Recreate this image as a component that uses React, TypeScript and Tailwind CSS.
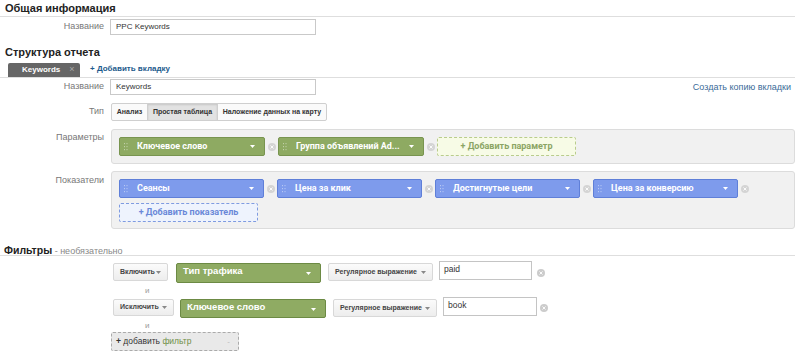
import React from "react";

const sans = "font-['Liberation_Sans',Arial,sans-serif]";
const roboto = "font-['Roboto','Liberation_Sans',sans-serif]";

function Remove({ light }: { light?: boolean }) {
  return (
    <span
      className={`flex h-[8px] w-[8px] items-center justify-center rounded-full ${
        light ? "bg-[#d4d4d4]" : "bg-[#cccccc]"
      }`}
    >
      <svg width="4" height="4" viewBox="0 0 4 4">
        <path d="M0.5 0.5L3.5 3.5M3.5 0.5L0.5 3.5" stroke="#fff" strokeWidth="0.9" />
      </svg>
    </span>
  );
}

function Grip() {
  return (
    <svg width="4" height="10" viewBox="0 0 4 10" className="shrink-0">
      {[1, 4, 7].map((y) => (
        <g key={y} fill="rgba(255,255,255,0.45)">
          <rect x="0" y={y} width="1" height="1.2" />
          <rect x="2.5" y={y} width="1" height="1.2" />
        </g>
      ))}
    </svg>
  );
}

function Caret({ color = "#fff" }: { color?: string }) {
  return (
    <svg width="5" height="3" viewBox="0 0 5 3" className="shrink-0">
      <path d="M0 0H5L2.5 3Z" fill={color} />
    </svg>
  );
}

function Chip({ text, kind, w = "w-[146px]" }: { text: string; kind: "dim" | "metric"; w?: string }) {
  const cls =
    kind === "dim"
      ? "bg-[#8eaa62] border-[#78944f]"
      : "bg-[#7e9bec] border-[#5f7fd8]";
  return (
    <div
      className={`flex h-[19px] ${w} shrink-0 items-center rounded-[2px] border ${cls} pl-[4px] pr-[9px]`}
    >
      <Grip />
      <span className={`ml-[9px] flex-1 truncate text-[9px] font-bold text-white ${roboto}`}>
        {text}
      </span>
      <Caret />
    </div>
  );
}

function Gap() {
  return (
    <div className="flex w-[13px] shrink-0 items-center justify-center">
      <Remove light />
    </div>
  );
}

function SelectBtn({ text, w, h = "h-[18px]", mt }: { text: string; w: string; h?: string; mt: string }) {
  return (
    <div
      className={`${w} ${h} ${mt} flex shrink-0 items-center justify-between whitespace-nowrap rounded-[2px] border border-[#d8d8d8] bg-gradient-to-b from-[#fbfbfb] to-[#ededed] pl-[6px] pr-[6px] text-[7px] font-bold text-[#444]`}
    >
      <span>{text}</span>
      <Caret color="#888" />
    </div>
  );
}

function FilterChip({ text, w, h, ml, mt }: { text: string; w: string; h: string; ml: string; mt: string }) {
  return (
    <div
      className={`${w} ${h} ${ml} ${mt} flex shrink-0 items-start justify-between rounded-[2px] border border-[#6c8a44] bg-[#8fab63] pl-[6px] pr-[9px] pt-[1px]`}
    >
      <span className="text-[9.5px] font-bold leading-[11px] text-white">{text}</span>
      <span className="mt-[7px]">
        <Caret />
      </span>
    </div>
  );
}

export default function App() {
  return (
    <div className={`h-[354px] w-[800px] overflow-hidden bg-white text-[#333] ${sans}`}>
      {/* Общая информация */}
      <div className="h-[17px] w-[795px] border-b border-[#dedede] pl-[5px] text-[11px] font-bold leading-[16px] text-[#222]">
        Общая информация
      </div>
      <div className="mt-[2px] flex h-[16px] items-center">
        <div className="w-[104px] text-right text-[9px] text-[#777]">Название</div>
        <div className="ml-[6px] flex h-[16px] w-[206px] items-center border border-[#c9c9c9] pl-[5px] text-[8px] text-[#333]">
          PPC Keywords
        </div>
      </div>

      {/* Структура отчета */}
      <div className="mt-[10px] h-[14px] pl-[5px] text-[11px] font-bold leading-[14px] text-[#222]">
        Структура отчета
      </div>
      <div className="mt-[4px] flex h-[15px] w-[795px] items-end border-b border-[#dedede]">
        <div className="ml-[8px] flex h-[14px] w-[72px] items-center rounded-t-[2px] bg-[#666] pl-[14px] text-[8px] font-bold text-white">
          Keywords
          <span className="ml-[9px] text-[9px] font-normal text-[#aaa]">×</span>
        </div>
        <div className="mb-[2px] ml-[10px] text-[8px] font-bold text-[#1d5a8c]">+ Добавить вкладку</div>
      </div>
      <div className="mt-[1px] flex h-[16px] items-center">
        <div className="w-[104px] text-right text-[9px] text-[#777]">Название</div>
        <div className="ml-[6px] flex h-[16px] w-[206px] items-center border border-[#c9c9c9] pl-[5px] text-[8px] text-[#333]">
          Keywords
        </div>
        <div className="ml-auto mr-[9px] mt-[2px] text-[9px] text-[#3b6b98]">Создать копию вкладки</div>
      </div>

      {/* Тип */}
      <div className="mt-[8px] flex h-[18px] items-center">
        <div className="w-[104px] text-right text-[9px] text-[#777]">Тип</div>
        <div className="ml-[7px] flex h-[18px] overflow-hidden rounded-[2px] border border-[#cfcfcf] bg-[#fafafa] text-[7px] font-bold text-[#333]">
          <div className="flex w-[35px] items-center justify-center">Анализ</div>
          <div className="flex w-[71px] items-center justify-center border-x border-[#cfcfcf] bg-[#e2e2e2] shadow-[inset_0_1px_2px_rgba(0,0,0,0.12)]">
            Простая таблица
          </div>
          <div className="flex w-[108px] items-center justify-center">Наложение данных на карту</div>
        </div>
      </div>

      {/* Параметры */}
      <div className="mt-[8px] flex items-start">
        <div className="w-[104px] pt-[3px] text-right text-[9px] leading-[11px] text-[#777]">Параметры</div>
        <div className="ml-[7px] flex w-[684px] items-center rounded-[3px] border border-[#dcdcdc] bg-[#f1f1f1] px-[7px] py-[7px]">
          <Chip text="Ключевое слово" kind="dim" />
          <Gap />
          <Chip text="Группа объявлений Ad..." kind="dim" />
          <Gap />
          <div
            className={`flex h-[19px] w-[139px] items-center justify-center rounded-[2px] border border-dashed border-[#b9cc8c] bg-[#f7fbe6] text-[9px] font-bold text-[#8ba564] ${roboto}`}
          >
            + Добавить параметр
          </div>
        </div>
      </div>

      {/* Показатели */}
      <div className="mt-[7px] flex items-start">
        <div className="w-[104px] pt-[4px] text-right text-[9px] leading-[11px] text-[#777]">Показатели</div>
        <div className="ml-[7px] flex w-[684px] flex-col rounded-[3px] border border-[#dcdcdc] bg-[#f1f1f1] px-[7px] pb-[6px] pt-[7px]">
          <div className="flex items-center">
            <Chip text="Сеансы" kind="metric" w="w-[145px]" />
            <Gap />
            <Chip text="Цена за клик" kind="metric" w="w-[145px]" />
            <Gap />
            <Chip text="Достигнутые цели" kind="metric" w="w-[145px]" />
            <Gap />
            <Chip text="Цена за конверсию" kind="metric" w="w-[145px]" />
            <Gap />
          </div>
          <div
            className={`mt-[5px] flex h-[19px] w-[139px] items-center justify-center rounded-[2px] border border-dashed border-[#7f9be0] bg-[#eef3fd] text-[9px] font-bold text-[#6a88d8] ${roboto}`}
          >
            + Добавить показатель
          </div>
        </div>
      </div>

      {/* Фильтры */}
      <div className="mt-[10px] h-[17px] w-[795px] border-b border-[#dedede] pl-[4px] pt-[3px] leading-[13px]">
        <span className="text-[10.5px] font-bold text-[#222]">Фильтры</span>
        <span className="text-[9px] text-[#888]"> - необязательно</span>
      </div>

      <div className="mt-[4px] flex h-[23px] items-start">
        <div className="w-[113px] shrink-0" />
        <SelectBtn text="Включить" w="w-[55px]" mt="mt-[3px]" />
        <FilterChip text="Тип трафика" w="w-[145px]" h="h-[20px]" ml="ml-[8px]" mt="mt-[3px]" />
        <div className="ml-[7px]">
          <SelectBtn text="Регулярное выражение" w="w-[105px]" mt="mt-[3px]" />
        </div>
        <div className="ml-[6px] mt-[1px] flex h-[19px] w-[93px] items-center border border-[#c4c4c4] pb-[2px] pl-[4px] text-[8.5px] text-[#333]">
          paid
        </div>
        <div className="ml-[5px] mt-[9px]">
          <Remove />
        </div>
      </div>
      <div className="mt-[2px] h-[12px] pl-[145px] text-[8px] leading-[12px] text-[#999]">и</div>

      <div className="flex h-[21px] items-start">
        <div className="w-[113px] shrink-0" />
        <SelectBtn text="Исключить" w="w-[61px]" h="h-[17px]" mt="mt-[2px]" />
        <FilterChip text="Ключевое слово" w="w-[146px]" h="h-[19px]" ml="ml-[6px]" mt="mt-[2px]" />
        <div className="ml-[7px]">
          <SelectBtn text="Регулярное выражение" w="w-[104px]" mt="mt-[2px]" />
        </div>
        <div className="ml-[6px] flex h-[19px] w-[94px] items-center border border-[#c4c4c4] pb-[2px] pl-[4px] text-[8.5px] text-[#333]">
          book
        </div>
        <div className="ml-[3px] mt-[7px]">
          <Remove />
        </div>
      </div>
      <div className="mt-[2px] h-[12px] pl-[145px] text-[8px] leading-[12px] text-[#999]">и</div>

      <div className="ml-[111px] flex h-[19px] w-[128px] items-center justify-between rounded-[2px] border border-dashed border-[#aaa] bg-[#e9e9e9] pl-[4px] pr-[8px] text-[8.5px]">
        <span>
          <span className="font-bold text-[#333]">+</span>
          <span className="text-[#333]"> добавить </span>
          <span className="text-[#6f8f47]">фильтр</span>
        </span>
        <span className="text-[8px] text-[#bbb]">-</span>
      </div>
    </div>
  );
}
